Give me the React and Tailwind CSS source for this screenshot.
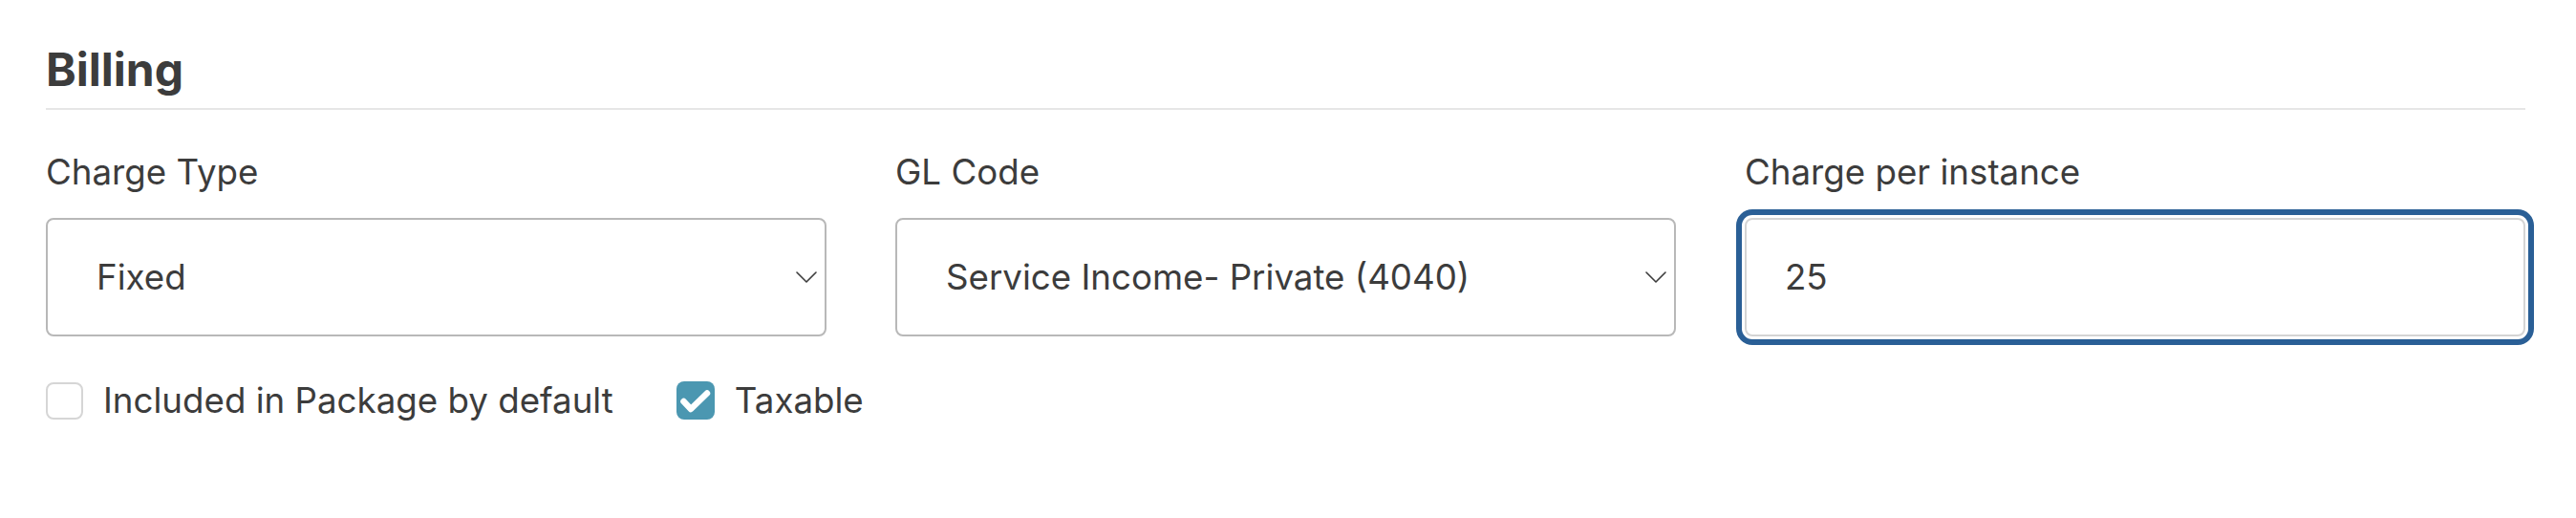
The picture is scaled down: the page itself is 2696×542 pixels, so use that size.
import React from 'react';

const font = { fontFamily: 'Inter, "Noto Sans", sans-serif' };

const Chevron = () => (
  <svg width="22" height="12" viewBox="0 0 22 12" fill="none" className="shrink-0">
    <path d="M1 1 L11 11 L21 1" stroke="#3c3c3c" strokeWidth="1.6" strokeLinecap="round" strokeLinejoin="round" />
  </svg>
);

const SelectBox = ({ value }) => (
  <div className="flex h-[124px] items-center justify-between rounded-[8px] border-2 border-[#b8b8b8] bg-white pl-[51px] pr-[8px] text-[36.7px] text-[#3c3c3c]">
    <span>{value}</span>
    <Chevron />
  </div>
);

const Field = ({ label, children }) => (
  <div className="flex flex-col">
    <label className="mb-[26px] text-[36.7px] leading-[44px] text-[#3c3c3c]">{label}</label>
    {children}
  </div>
);

const Checkbox = ({ checked, label }) => (
  <label className="flex items-center gap-[21px]">
    {checked ? (
      <span className="flex h-[40px] w-[40px] items-center justify-center rounded-[8px] bg-[#4b97b1]">
        <svg width="40" height="40" viewBox="0 0 40 40">
          <path d="M7.5 21 L15 29 L32 12.5" fill="none" stroke="#fff" strokeWidth="6.5" strokeLinecap="round" strokeLinejoin="round" />
        </svg>
      </span>
    ) : (
      <span className="h-[39px] w-[39px] rounded-[8px] border-2 border-[#d6d6d6] bg-white" />
    )}
    <span className="text-[36.7px] leading-[44px] text-[#3c3c3c]">{label}</span>
  </label>
);

export default function App() {
  return (
    <div className="min-h-[542px] w-full bg-white pl-[48px] pr-[53px] pt-[44px]" style={font}>
      <h2 className="border-b-2 border-[#e6e6e6] pb-[11px] text-[48px] font-bold leading-[58px] text-[#3c3c3c]">
        Billing
      </h2>

      <div className="mt-[43px] grid grid-cols-3 gap-x-[72px]">
        <Field label="Charge Type">
          <SelectBox value="Fixed" />
        </Field>
        <Field label="GL Code">
          <SelectBox value="Service Income- Private (4040)" />
        </Field>
        <Field label="Charge per instance">
          <div className="flex h-[124px] items-center rounded-[8px] border-2 border-[#d4d4d4] bg-white pl-[40px] text-[36.7px] text-[#3c3c3c] ring-[6px] ring-[#2a5f96] ring-offset-[3px]">
            25
          </div>
        </Field>
      </div>

      <div className="mt-[45px] flex items-center gap-[66px]">
        <Checkbox label="Included in Package by default" />
        <Checkbox checked label="Taxable" />
      </div>
    </div>
  );
}
